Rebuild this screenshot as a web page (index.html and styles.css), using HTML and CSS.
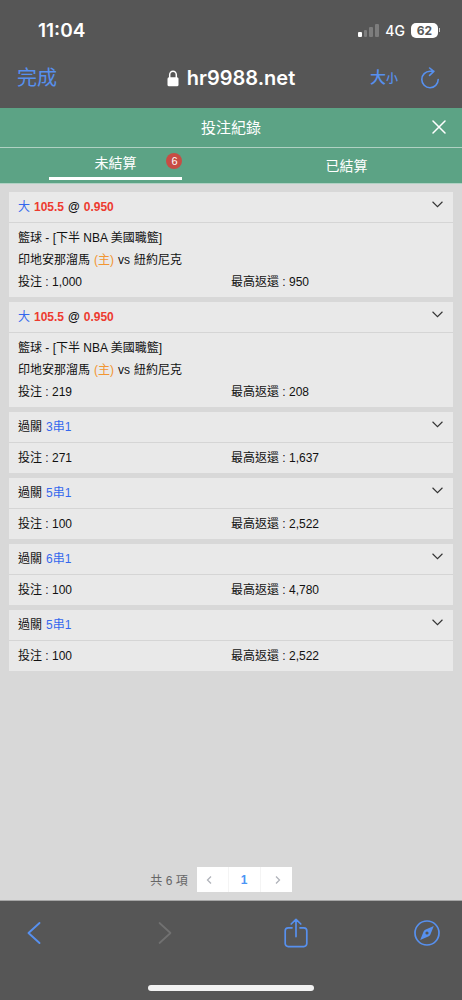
FILE: index.html
```html
<!DOCTYPE html>
<html lang="zh-Hant">
<head>
<meta charset="utf-8">
<meta name="viewport" content="width=device-width, initial-scale=1">
<title>投注紀錄</title>
<link rel="stylesheet" href="styles.css">
</head>
<body>
<div class="screen">
  <header class="browser-top">
    <div class="status-bar">
      <time class="clock">11:04</time>
      <div class="status-icons">
        <svg class="signal" width="21" height="15" viewBox="0 0 21 15" aria-hidden="true">
          <rect x="0" y="9" width="4" height="5" rx="1" fill="#fff"/>
          <rect x="6" y="7" width="3" height="7" rx="1" fill="#7d7d7d"/>
          <rect x="11" y="4" width="4" height="10" rx="1" fill="#7d7d7d"/>
          <rect x="17" y="1" width="4" height="13" rx="1" fill="#7d7d7d"/>
        </svg>
        <span class="network">4G</span>
        <span class="battery"><span class="battery-level">62</span><span class="battery-tip"></span></span>
      </div>
    </div>
    <div class="address-bar">
      <button class="done" type="button">完成</button>
      <div class="address">
        <svg width="12" height="17" viewBox="0 0 12 17" aria-hidden="true">
          <path d="M2.7 8V4.8a3.3 3.6 0 0 1 6.6 0V8" fill="none" stroke="#fff" stroke-width="1.5"/>
          <rect x="0.5" y="7.2" width="11" height="9" rx="1.5" fill="#fff"/>
        </svg>
        <span>hr9988.net</span>
      </div>
      <div class="address-tools">
        <button class="text-size" type="button" aria-label="文字大小"><span>大</span><span class="small">小</span></button>
        <button class="icon-button" type="button" aria-label="重新載入">
          <svg width="20" height="22" viewBox="0 0 20 22" fill="none" stroke="#5790ee" stroke-width="1.6" stroke-linecap="round" stroke-linejoin="round">
            <path d="M18.2 12.6A8.2 8.2 0 1 1 10 4.3H14M9.6 1l4.2 3.4-4.2 4"/>
          </svg>
        </button>
      </div>
    </div>
  </header>

  <main class="page">
    <div class="title-bar">
      <h1>投注紀錄</h1>
      <button class="close" type="button" aria-label="關閉">
        <svg width="14" height="14" viewBox="0 0 14 14" stroke="#fff" stroke-width="1.5" stroke-linecap="round"><path d="M1 1l12 12M13 1L1 13"/></svg>
      </button>
    </div>
    <div class="tabs" role="tablist">
      <button class="tab active" type="button" role="tab" aria-selected="true"><span class="tab-label">未結算<span class="badge">6</span></span></button>
      <button class="tab" type="button" role="tab" aria-selected="false">已結算</button>
    </div>

    <div class="bets">
      <article class="bet">
        <button class="bet-head" type="button"><span class="pick"><span class="blue">大</span> <span class="red">105.5</span> <b>@</b> <span class="red">0.950</span></span><svg class="chevron" viewBox="0 0 10 6"><path d="M0.5 0.5L5 5L9.5 0.5"/></svg></button>
        <div class="bet-body">
          <p>籃球 - [下半 NBA 美國職籃]</p>
          <p class="teams"><span>印地安那溜馬</span><span class="home">(主)</span><span>vs</span><span>紐約尼克</span></p>
          <div class="amounts"><span>投注 : 1,000</span><span>最高返還 : 950</span></div>
        </div>
      </article>
      <article class="bet">
        <button class="bet-head" type="button"><span class="pick"><span class="blue">大</span> <span class="red">105.5</span> <b>@</b> <span class="red">0.950</span></span><svg class="chevron" viewBox="0 0 10 6"><path d="M0.5 0.5L5 5L9.5 0.5"/></svg></button>
        <div class="bet-body">
          <p>籃球 - [下半 NBA 美國職籃]</p>
          <p class="teams"><span>印地安那溜馬</span><span class="home">(主)</span><span>vs</span><span>紐約尼克</span></p>
          <div class="amounts"><span>投注 : 219</span><span>最高返還 : 208</span></div>
        </div>
      </article>
      <article class="bet">
        <button class="bet-head" type="button"><span class="pick"><span>過關</span> <span class="blue">3串1</span></span><svg class="chevron" viewBox="0 0 10 6"><path d="M0.5 0.5L5 5L9.5 0.5"/></svg></button>
        <div class="bet-body"><div class="amounts"><span>投注 : 271</span><span>最高返還 : 1,637</span></div></div>
      </article>
      <article class="bet">
        <button class="bet-head" type="button"><span class="pick"><span>過關</span> <span class="blue">5串1</span></span><svg class="chevron" viewBox="0 0 10 6"><path d="M0.5 0.5L5 5L9.5 0.5"/></svg></button>
        <div class="bet-body"><div class="amounts"><span>投注 : 100</span><span>最高返還 : 2,522</span></div></div>
      </article>
      <article class="bet">
        <button class="bet-head" type="button"><span class="pick"><span>過關</span> <span class="blue">6串1</span></span><svg class="chevron" viewBox="0 0 10 6"><path d="M0.5 0.5L5 5L9.5 0.5"/></svg></button>
        <div class="bet-body"><div class="amounts"><span>投注 : 100</span><span>最高返還 : 4,780</span></div></div>
      </article>
      <article class="bet">
        <button class="bet-head" type="button"><span class="pick"><span>過關</span> <span class="blue">5串1</span></span><svg class="chevron" viewBox="0 0 10 6"><path d="M0.5 0.5L5 5L9.5 0.5"/></svg></button>
        <div class="bet-body"><div class="amounts"><span>投注 : 100</span><span>最高返還 : 2,522</span></div></div>
      </article>
    </div>

    <nav class="pagination" aria-label="分頁">
      <span>共 6 項</span>
      <div class="pager">
        <button class="prev" type="button" aria-label="上一頁"><svg width="6" height="8" viewBox="0 0 6 8"><path d="M5 0.5L1.5 4L5 7.5"/></svg></button>
        <button class="current" type="button">1</button>
        <button class="next" type="button" aria-label="下一頁"><svg width="6" height="8" viewBox="0 0 6 8"><path d="M1 0.5L4.5 4L1 7.5"/></svg></button>
      </div>
    </nav>
  </main>

  <footer class="browser-bottom">
    <div class="toolbar">
      <button class="icon-button" type="button" aria-label="返回">
        <svg width="14" height="24" viewBox="0 0 14 24" fill="none" stroke="#5790ee" stroke-width="1.9" stroke-linecap="round" stroke-linejoin="round"><path d="M12.5 2L1.5 12L12.5 22"/></svg>
      </button>
      <button class="icon-button" type="button" aria-label="前進">
        <svg width="14" height="24" viewBox="0 0 14 24" fill="none" stroke="#717171" stroke-width="1.7" stroke-linecap="round" stroke-linejoin="round"><path d="M1.5 2L12.5 12L1.5 22"/></svg>
      </button>
      <button class="icon-button" type="button" aria-label="分享">
        <svg width="24" height="30" viewBox="0 0 24 30" fill="none" stroke="#5790ee" stroke-width="1.7" stroke-linecap="round" stroke-linejoin="round"><path d="M8 9.8H4.2A3 3 0 0 0 1.2 12.8V25.6A3 3 0 0 0 4.2 28.6H19.8A3 3 0 0 0 22.8 25.6V12.8A3 3 0 0 0 19.8 9.8H16M12 18.6V1.4M7.2 6L12 1.3L16.8 6"/></svg>
      </button>
      <button class="icon-button" type="button" aria-label="在瀏覽器中開啟">
        <svg width="26" height="26" viewBox="0 0 26 26"><circle cx="13" cy="13" r="12" fill="none" stroke="#5790ee" stroke-width="1.7"/><path fill="#5790ee" fill-rule="evenodd" d="M19.8 6L16.4 14.6A3 3 0 0 1 14.8 16.2L6.2 20L9.6 11.4A3 3 0 0 1 11.2 9.8ZM13 11.4a1.6 1.6 0 1 0 0 3.2a1.6 1.6 0 1 0 0-3.2Z"/></svg>
      </button>
    </div>
    <div class="home-indicator"></div>
  </footer>
</div>
</body>
</html>
```

FILE: styles.css
```css
* { box-sizing: border-box; }

body {
  margin: 0;
  font-family: "Liberation Sans", "Noto Sans CJK TC", sans-serif;
  font-size: 12px;
  color: #111;
  background: #565656;
}

button {
  margin: 0;
  padding: 0;
  border: 0;
  background: none;
  font: inherit;
  color: inherit;
}

svg { display: block; }
h1, p { margin: 0; }

.screen {
  display: flex;
  flex-direction: column;
  min-height: 100vh;
}

/* Browser header */
.browser-top {
  padding-top: 16px;
  color: #fff;
  background: #565656;
  font-family: Inter, "Noto Sans CJK TC", sans-serif;
}

.status-bar {
  display: flex;
  align-items: center;
  justify-content: space-between;
  height: 28px;
  padding: 0 22px 0 38px;
}

.clock {
  font-size: 19px;
  font-weight: 600;
}

.status-icons {
  display: flex;
  align-items: center;
  gap: 6px;
}

.network { font-size: 14px; font-weight: 500; }

.battery {
  display: flex;
  align-items: center;
  gap: 1px;
}

.battery-level {
  width: 27px;
  border-radius: 5px;
  background: #fff;
  color: #565656;
  font-size: 12px;
  font-weight: 700;
  line-height: 15px;
  text-align: center;
}

.battery-tip {
  width: 1px;
  height: 4px;
  background: #ccc;
}

.address-bar {
  display: grid;
  grid-template-columns: 1fr auto 1fr;
  align-items: center;
  height: 64px;
  padding: 4px 17px 0;
}

.done {
  justify-self: start;
  color: #5790ee;
  font-size: 20px;
  line-height: 28px;
}

.address {
  display: flex;
  align-items: center;
  gap: 8px;
  font-size: 20px;
  font-weight: 600;
}

.address-tools {
  display: flex;
  align-items: center;
  justify-content: flex-end;
  gap: 22px;
  padding-right: 5px;
}

.text-size {
  color: #5790ee;
  font-size: 16px;
  font-weight: 500;
  line-height: 24px;
}

.small { font-size: 12px; }

/* Bet records */
.page {
  flex: 1;
  display: flex;
  flex-direction: column;
  background: #d8d8d8;
  border-bottom: 1px solid #a6a6a6;
}

.title-bar {
  display: grid;
  grid-template-columns: 1fr auto 1fr;
  align-items: center;
  height: 40px;
  padding: 0 16px 2px;
  border-bottom: 1px solid #b0d1c3;
  background: #5ca385;
  color: #fff;
}

.title-bar h1 {
  grid-column: 2;
  font-size: 15px;
  font-weight: 400;
}

.close {
  justify-self: end;
}

.tabs {
  display: grid;
  grid-template-columns: 1fr 1fr;
  height: 36px;
  border-bottom: 1px solid #b0d1c3;
  background: #5ca385;
  color: #fff;
  font-size: 14px;
}

.tab {
  display: flex;
  align-items: center;
  justify-content: center;
  padding-bottom: 2px;
}

.tab-label {
  position: relative;
  width: 58%;
  padding-bottom: 1px;
  border-bottom: 3px solid #fff;
  line-height: 26px;
}

.badge {
  position: absolute;
  top: 3px;
  right: 0;
  width: 16px;
  border-radius: 8px;
  background: #c84c44;
  font-size: 11px;
  line-height: 16px;
}

.bets {
  display: flex;
  flex-direction: column;
  gap: 5px;
  padding: 8px 9px;
}

.bet { background: #e9e9e9; }

.bet-head {
  display: flex;
  align-items: center;
  justify-content: space-between;
  width: 100%;
  height: 31px;
  padding: 0 10px 0 9px;
  border-bottom: 1px solid #d5d5d5;
}

.pick {
  display: flex;
  align-items: baseline;
  gap: 4px;
  line-height: 22px;
}

.blue { color: #3568ed; }
.red { color: #ed3b30; font-weight: 700; }

.chevron {
  width: 11px;
  height: 7px;
  margin-bottom: 6px;
  fill: none;
  stroke: #333;
}

.bet-body {
  padding: 4px 9px;
  line-height: 22px;
}

.teams { display: flex; gap: 4px; }
.home { color: #f29632; }

.amounts {
  display: grid;
  grid-template-columns: 1fr 1fr;
}

.pagination {
  display: flex;
  align-items: center;
  justify-content: center;
  gap: 9px;
  margin-top: auto;
  padding: 8px 20px 8px 0;
  color: #666;
}

.pager {
  display: flex;
  gap: 1px;
  background: #f4f4f4;
}

.pager button {
  display: flex;
  align-items: center;
  justify-content: center;
  width: 31px;
  height: 25px;
  background: #fff;
}

.pager .prev { padding-right: 6px; }
.pager .next { padding-left: 4px; }
.pager svg { fill: none; stroke: #b0b3ba; stroke-width: 1.3; }
.pager .current { color: #4b95f5; font-weight: 700; }

/* Browser footer */
.browser-bottom {
  display: flex;
  flex-direction: column;
  align-items: center;
  padding-bottom: 9px;
  background: #565656;
}

.toolbar {
  display: flex;
  align-items: center;
  justify-content: space-between;
  width: 100%;
  height: 64px;
  padding: 0 22px 0 21px;
}

.toolbar .icon-button {
  display: flex;
  justify-content: center;
  width: 26px;
}

.home-indicator {
  width: 36%;
  height: 6px;
  margin-top: 20px;
  border-radius: 3px;
  background: #f2f2f2;
}
```
